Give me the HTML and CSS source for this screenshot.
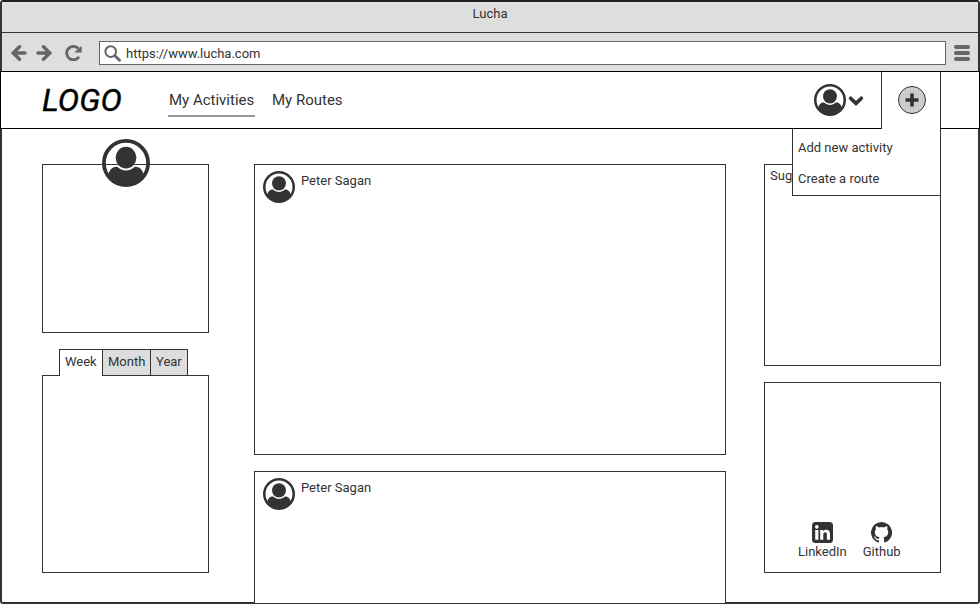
FILE: index.html
```html
<!DOCTYPE html>
<html lang="en">
<head>
<meta charset="utf-8">
<title>Lucha</title>
<link rel="stylesheet" href="styles.css">
</head>
<body>
<svg class="defs" aria-hidden="true">
  <symbol id="avatar" viewBox="0 0 48 48">
    <circle cx="24" cy="24" r="22.1" fill="none" stroke="#333" stroke-width="3.8"/>
    <ellipse cx="24" cy="18.600" rx="10.400" ry="10.800" fill="#333"/>
    <path d="M6 37c1-6 4.500-9.800 9.200-9.200 4.800 4.800 12.800 4.800 17.600 0 4.700-.600 8.200 3.200 9.200 9.200A22.500 22.500 0 0 1 6 37z" fill="#333"/>
  </symbol>
</svg>
<div class="window">
  <div class="titlebar"><span>Lucha</span></div>
  <div class="toolbar">
    <svg class="arrow" viewBox="0 0 16 16"><path d="M8.500 1.700 2.200 8l6.300 6.300M2.800 8H14"/></svg>
    <svg class="arrow forward" viewBox="0 0 16 16"><path d="M7.500 1.700 13.800 8l-6.300 6.300M13.200 8H2"/></svg>
    <svg class="reload" viewBox="0 0 17 16"><path d="M14 11.800A6.700 6.700 0 1 1 13.300 3.500" fill="none" stroke="#666" stroke-width="2.900"/><path d="M16.700.800v6.700H9.200z" fill="#666"/></svg>
    <div class="address">
      <svg class="search" viewBox="0 0 16 16"><circle cx="6.300" cy="6.200" r="5" fill="none" stroke="#666" stroke-width="1.900"/><path d="m10.200 10.100 4.400 4.300" stroke="#666" stroke-width="2.700" stroke-linecap="round"/></svg>
      <span class="url">https://www.lucha.com</span>
    </div>
    <div class="burger"><i></i><i></i><i></i></div>
  </div>
  <nav class="nav">
    <div class="logo">LOGO</div>
    <a class="link active"><span>My Activities</span></a>
    <a class="link routes"><span>My Routes</span></a>
    <div class="account">
      <svg class="avatar"><use href="#avatar"/></svg>
      <svg class="chevron" viewBox="0 0 16 12"><path d="m2.600 3.200 5.400 5.200 5.400-5.200" fill="none" stroke="#333" stroke-width="3.600" stroke-linecap="round"/></svg>
    </div>
    <div class="create">
      <svg class="plus" viewBox="0 0 28 28"><circle cx="14" cy="14" r="13.500" fill="#ccc" stroke="#333"/><path d="M14 7.500v13M7.500 14h13" stroke="#333" stroke-width="3.600"/></svg>
      <div class="menu">
        <a>Add new activity</a>
        <a>Create a route</a>
      </div>
    </div>
  </nav>
  <main class="content">
    <div class="left">
      <section class="card profile"><svg class="avatar big"><use href="#avatar"/></svg></section>
      <div class="tabs">
        <span class="tab week">Week</span><span class="tab month">Month</span><span class="tab year">Year</span>
      </div>
      <section class="card stats"></section>
    </div>
    <div class="feed">
      <article class="card post"><svg class="avatar"><use href="#avatar"/></svg><span class="name">Peter Sagan</span></article>
      <article class="card post last"><svg class="avatar"><use href="#avatar"/></svg><span class="name">Peter Sagan</span></article>
    </div>
    <div class="right">
      <section class="card suggest">Sug</section>
      <section class="card social">
        <a class="linkedin">
          <svg viewBox="0 0 21 21"><rect width="21" height="21" rx="3.500" fill="#333"/><circle cx="4.800" cy="4.900" r="1.800" fill="#fff"/><path d="M3.200 8h3.200v9.700H3.200zM8.200 8h3v1.300c.700-1.100 1.700-1.600 3-1.600 2.500 0 3.800 1.600 3.800 4.100v5.900h-3.100v-5.500c0-1.300-.600-2-1.700-2-1.300 0-1.900.900-1.900 2.300v5.200H8.200z" fill="#fff"/></svg>
          <span>LinkedIn</span>
        </a>
        <a class="github">
          <svg viewBox="0 0 16 16"><path fill="#333" d="M8 0a8 8 0 0 0-2.530 15.590c.4.070.550-.170.550-.380v-1.490c-2.010.370-2.530-.490-2.690-.940-.090-.230-.480-.940-.820-1.130-.280-.150-.680-.520-.010-.530.630-.010 1.080.580 1.230.820.720 1.210 1.870.870 2.330.660.070-.520.280-.870.510-1.070-1.780-.200-3.640-.890-3.640-3.950 0-.870.310-1.590.820-2.150-.080-.200-.360-1.020.080-2.120 0 0 .670-.210 2.200.820a7.600 7.600 0 0 1 4 0c1.530-1.040 2.200-.820 2.200-.820.440 1.100.160 1.920.080 2.120.510.560.820 1.270.820 2.150 0 3.070-1.870 3.750-3.650 3.950.290.250.540.730.540 1.480v2.200c0 .210.150.460.550.380A8 8 0 0 0 8 0z"/></svg>
          <span>Github</span>
        </a>
      </section>
    </div>
  </main>
</div>
</body>
</html>
```
FILE: styles.css
```css
* { box-sizing: border-box; }
body { margin: 0; background: #fff; font: 13px/16px Roboto, sans-serif; color: #333; overflow: hidden; }
svg { display: block; flex: none; }
.defs { position: absolute; width: 0; height: 0; }
.window { width: 980px; height: 604px; border: 2px solid #333; border-top-color: #231f20; border-radius: 3px; display: flex; flex-direction: column; }
.titlebar { height: 31px; flex: none; background: #dededd; border-bottom: 1px solid #333; text-align: center; padding-top: 4px; }
.toolbar { height: 38px; flex: none; background: #dededd; display: flex; align-items: center; padding: 2px 8px 0 9px; }
.arrow { width: 16px; height: 16px; fill: none; stroke: #666; stroke-width: 3.4; stroke-linecap: round; }
.forward { margin-left: 9px; }
.reload { width: 17px; height: 16px; margin-left: 13px; }
.address { flex: 1; height: 24px; margin: 0 8px 0 17px; background: #fff; border: 1px solid #666; display: flex; align-items: center; padding-left: 4px; }
.search { width: 17px; height: 17px; margin-right: 5px; }
.url { padding-top: 2px; }
.burger { width: 16px; display: flex; flex-direction: column; gap: 2px; }
.burger i { height: 4px; border-radius: 2px; background: #666; }
.nav { height: 58px; flex: none; margin: 0 -2px; border: 1px solid #000; background: #fff; display: flex; }
.logo { width: 126px; padding: 10px 0 0 41px; font: italic 400 32px/36px Roboto, sans-serif; color: #000; letter-spacing: .1px; -webkit-text-stroke: .4px #000; }
.link { width: 87px; height: 45px; margin-left: 41px; padding: 19px 0 0 1px; font-size: 15px; line-height: 18px; white-space: nowrap; border-bottom: 2px solid transparent; }
.link.active { border-color: #999; }
.link.routes { margin-left: 16px; }
.account { display: flex; margin: 12px 17px 0 auto; }
.avatar { width: 32px; height: 32px; }
.chevron { width: 16px; height: 12px; margin: 11px 0 0 2px; }
.create { width: 60px; height: 58px; margin: -1px 38px 0 0; border: 1px solid #333; border-top-color: #000; border-bottom: 0; background: #fff; position: relative; z-index: 2; }
.plus { width: 28px; height: 28px; margin: 14px 0 0 16px; }
.menu { position: absolute; right: -1px; top: 57px; width: 149px; height: 67px; border: 1px solid #333; border-top: 0; background: #fff; padding: 11px 5px; z-index: -1; display: flex; flex-direction: column; gap: 15px; white-space: nowrap; }
.content { flex: 1; min-height: 0; display: flex; padding: 35px 37px 0 40px; }
.card { border: 1px solid #333; }
.left { width: 167px; }
.profile { height: 169px; }
.big { width: 48px; height: 48px; margin: -26px 0 0 59px; }
.tabs { display: flex; height: 27px; margin: 16px 0 -1px 17px; position: relative; }
.tab { border: 1px solid #333; background: #ddd; padding: 4px 0 0 5px; white-space: nowrap; }
.week { width: 44px; background: #fff; border-bottom: 0; }
.month { width: 49px; margin-left: -1px; }
.year { width: 38px; margin-left: -1px; }
.stats { height: 198px; }
.feed { width: 472px; margin-left: 45px; }
.post { height: 291px; display: flex; padding: 6px 8px; }
.post.last { height: 133px; margin-top: 16px; position: relative; background: #fff; }
.name { margin: 2px 0 0 6px; }
.right { width: 177px; margin-left: 38px; }
.suggest { height: 202px; padding: 3px 5px; }
.social { height: 191px; margin-top: 16px; display: flex; align-items: flex-end; padding: 0 0 12px 33px; gap: 16px; }
.social a { display: flex; flex-direction: column; align-items: center; gap: 1px; white-space: nowrap; }
.social svg { width: 21px; height: 21px; }
```
